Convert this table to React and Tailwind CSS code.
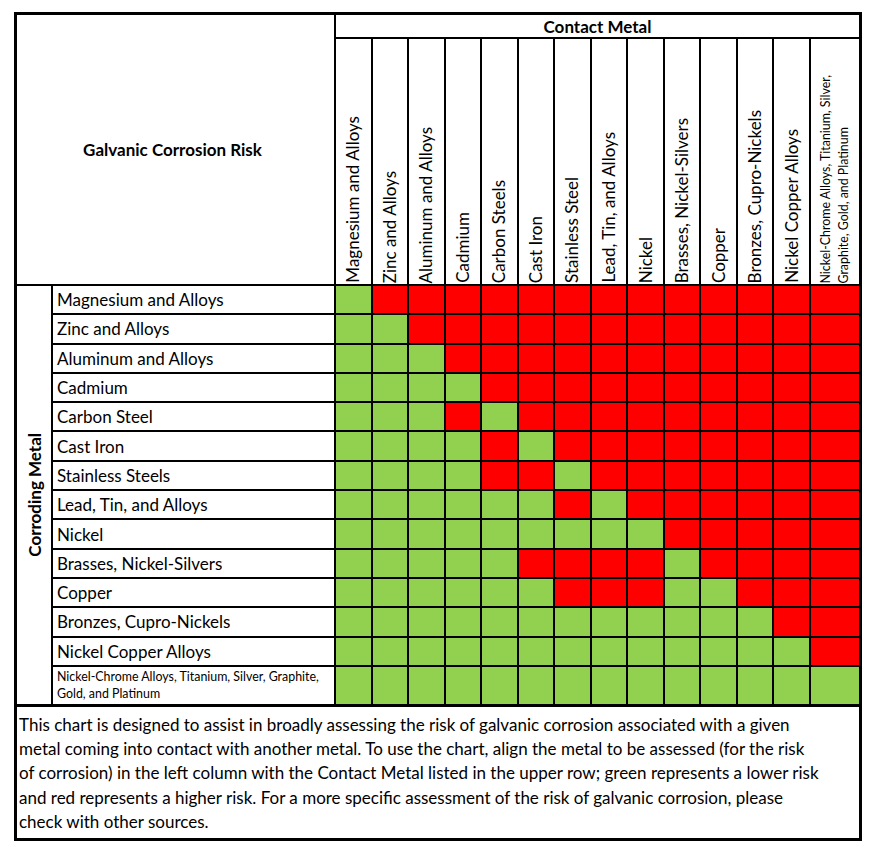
const contactMetals = [
  'Magnesium and Alloys',
  'Zinc and Alloys',
  'Aluminum and Alloys',
  'Cadmium',
  'Carbon Steels',
  'Cast Iron',
  'Stainless Steel',
  'Lead, Tin, and Alloys',
  'Nickel',
  'Brasses, Nickel-Silvers',
  'Copper',
  'Bronzes, Cupro-Nickels',
  'Nickel Copper Alloys',
]

const corrodingMetals = [
  'Magnesium and Alloys',
  'Zinc and Alloys',
  'Aluminum and Alloys',
  'Cadmium',
  'Carbon Steel',
  'Cast Iron',
  'Stainless Steels',
  'Lead, Tin, and Alloys',
  'Nickel',
  'Brasses, Nickel-Silvers',
  'Copper',
  'Bronzes, Cupro-Nickels',
  'Nickel Copper Alloys',
]

// G = lower risk, R = higher risk; one string per corroding metal
const risk = [
  'GRRRRRRRRRRRRR',
  'GGRRRRRRRRRRRR',
  'GGGRRRRRRRRRRR',
  'GGGGRRRRRRRRRR',
  'GGGRGRRRRRRRRR',
  'GGGGRGRRRRRRRR',
  'GGGGRRGRRRRRRR',
  'GGGGGGRGRRRRRR',
  'GGGGGGGGGRRRRR',
  'GGGGGRRRRGRRRR',
  'GGGGGGRRRGGRRR',
  'GGGGGGGGGGGGRR',
  'GGGGGGGGGGGGGR',
  'GGGGGGGGGGGGGG',
]

const footerLines = [
  'This chart is designed to assist in broadly assessing the risk of galvanic corrosion associated with a given',
  'metal coming into contact with another metal. To use the chart, align the metal to be assessed (for the risk',
  'of corrosion) in the left column with the Contact Metal listed in the upper row; green represents a lower risk',
  'and red represents a higher risk. For a more specific assessment of the risk of galvanic corrosion, please',
  'check with other sources.',
]

function RiskCell({ value }) {
  return <div className={value === 'G' ? 'bg-[#92d050]' : 'bg-[#ff0000]'} />
}

function App() {
  return (
    <div className="min-h-screen bg-white pl-[14px] pt-[12px] font-['Lato',sans-serif] text-black">
      <div className="w-[848px] border-[3px] border-black bg-white">
        <div className="grid grid-cols-[34px_281px_repeat(13,minmax(0,1fr))_48px] grid-rows-[22px_245px_repeat(13,27.3px)_37px] gap-[2px] bg-black">
          <div className="col-span-2 row-span-2 flex items-center justify-center bg-white pr-[6px] text-[17px] font-bold">
            Galvanic Corrosion Risk
          </div>
          <div className="col-span-14 flex items-center justify-center bg-white text-[17px] font-bold leading-none">
            Contact Metal
          </div>

          {contactMetals.map((name) => (
            <div key={name} className="flex items-end justify-center bg-white pb-[1px]">
              <span className="rotate-180 whitespace-nowrap text-[17px] leading-[20px] [writing-mode:vertical-rl]">
                {name}
              </span>
            </div>
          ))}
          <div className="flex items-end justify-center bg-white pb-[1px]">
            <span className="rotate-180 whitespace-nowrap text-[12.4px] leading-[18px] [writing-mode:vertical-rl]">
              Nickel-Chrome Alloys, Titanium, Silver,
              <br />
              Graphite, Gold, and Platinum
            </span>
          </div>

          <div className="row-span-14 flex items-center justify-center bg-white">
            <span className="rotate-180 whitespace-nowrap text-[17px] font-bold leading-none [writing-mode:vertical-rl]">
              Corroding Metal
            </span>
          </div>

          {corrodingMetals.map((name, rowIndex) => (
            <div key={name} className="contents">
              <div className="flex items-center bg-white pl-[4px] text-[17px] leading-none">{name}</div>
              {risk[rowIndex].split('').map((value, colIndex) => (
                <RiskCell key={colIndex} value={value} />
              ))}
            </div>
          ))}

          <div className="flex flex-col justify-center bg-white pl-[4px] text-[12.4px] leading-[17.5px]">
            <span>Nickel-Chrome Alloys, Titanium, Silver, Graphite,</span>
            <span>Gold, and Platinum</span>
          </div>
          {risk[13].split('').map((value, colIndex) => (
            <RiskCell key={colIndex} value={value} />
          ))}
        </div>

        <div className="h-[134px] border-t-[3px] border-black px-[2px] pt-[6px] text-[17px] leading-[24.3px]">
          {footerLines.map((line) => (
            <p key={line} className="whitespace-nowrap">
              {line}
            </p>
          ))}
        </div>
      </div>
    </div>
  )
}

export default App
